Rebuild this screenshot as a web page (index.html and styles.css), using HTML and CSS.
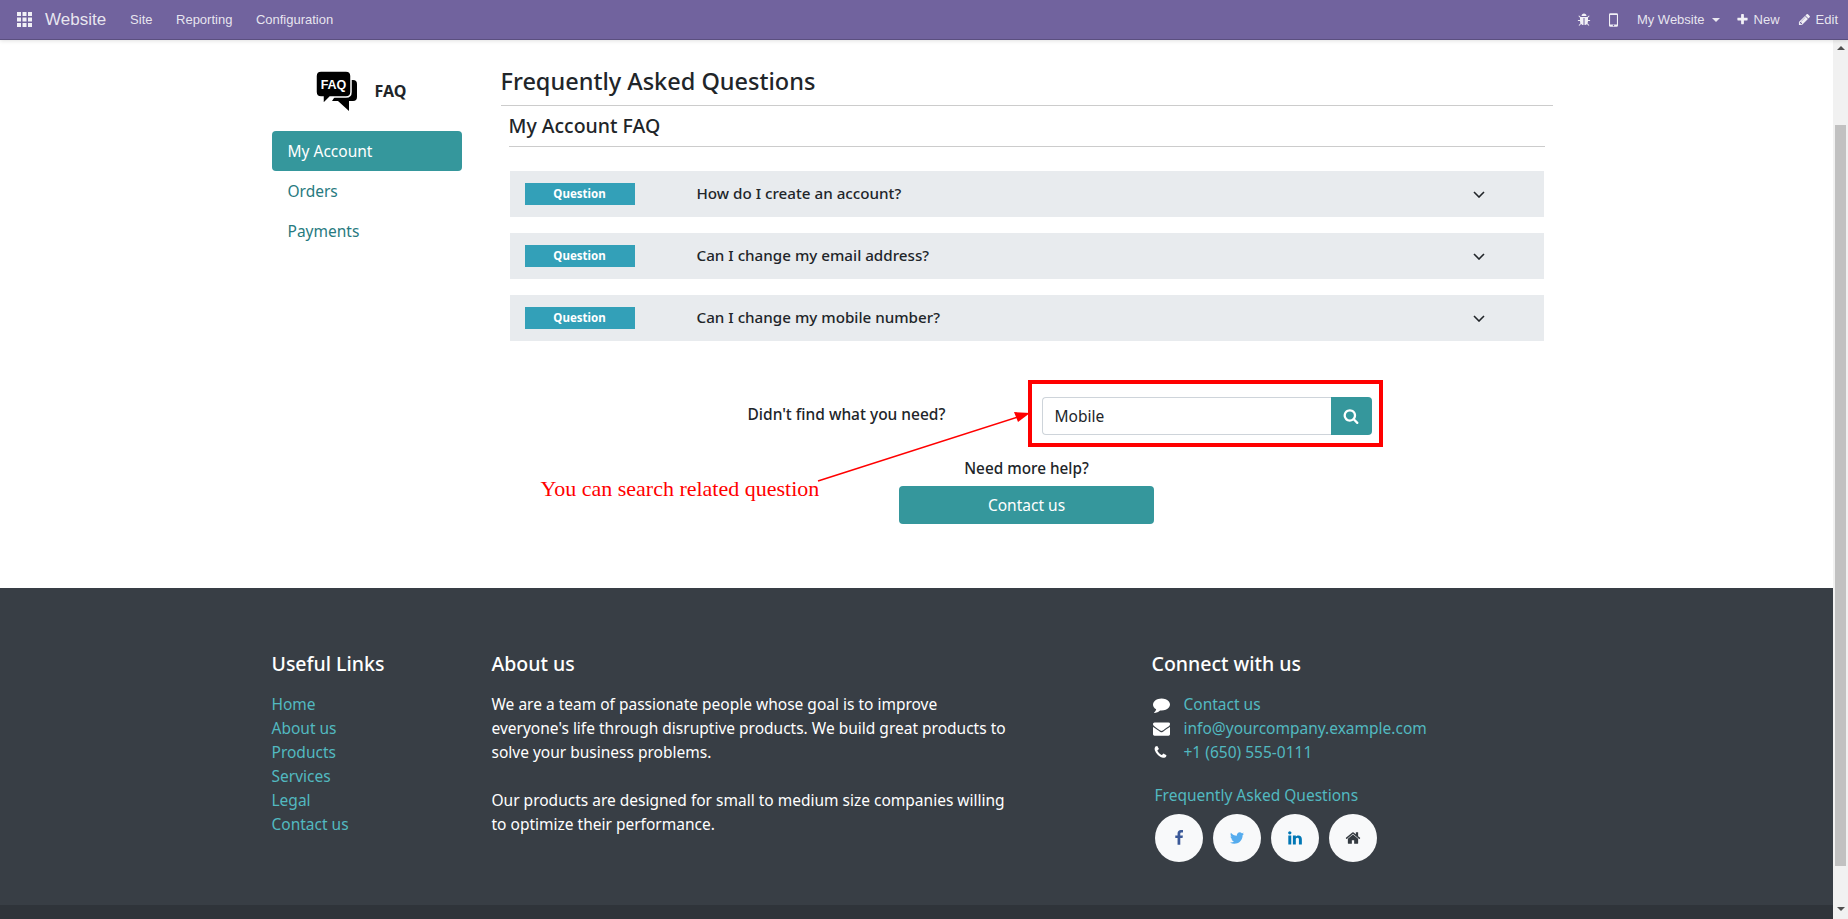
FILE: index.html
```html
<!DOCTYPE html>
<html lang="en">
<head>
    <meta charset="UTF-8">
    <meta name="viewport" content="width=device-width, initial-scale=1.0">
    <title>Frequently Asked Questions</title>
    <link rel="stylesheet" href="styles.css">
</head>
<body>
    <header class="navbar">
        <svg class="apps-icon" viewBox="0 0 15 15"><path d="M0 0h4v4H0zM5.5 0h4v4h-4zM11 0h4v4h-4zM0 5.5h4v4H0zM5.5 5.5h4v4h-4zM11 5.5h4v4h-4zM0 11h4v4H0zM5.5 11h4v4h-4zM11 11h4v4h-4z"/></svg>
        <span class="brand">Website</span>
        <a class="nav-link">Site</a>
        <a class="nav-link">Reporting</a>
        <a class="nav-link">Configuration</a>
        <div class="nav-right">
            <svg class="nav-icon bug" viewBox="0 0 1792 1792"><path d="M1696 960q0 26-19 45t-45 19h-224q0 171-67 290l208 209q19 19 19 45t-19 45q-18 19-45 19t-45-19l-198-197q-5 5-15 13t-42 28.5-65 36.5-82 29-97 13v-896h-128v896q-51 0-101.5-13.5t-87-33-66-39-43.5-32.5l-15-14-183 207q-20 21-48 21-24 0-43-16-19-18-20.5-44.5t15.5-46.5l202-227q-58-114-58-274h-224q-26 0-45-19t-19-45 19-45 45-19h224v-294l-173-173q-19-19-19-45t19-45 45-19 45 19l173 173h844l173-173q19-19 45-19t45 19 19 45-19 45l-173 173v294h224q26 0 45 19t19 45zm-480-576h-640q0-133 93.5-226.5t226.5-93.5 226.5 93.5 93.5 226.5z"/></svg>
            <svg class="nav-icon mobile" viewBox="0 0 10 15"><path fill-rule="evenodd" d="M1.5 0h7A1.5 1.5 0 0 1 10 1.5v12A1.5 1.5 0 0 1 8.500 15h-7A1.500 1.500 0 0 1 0 13.500v-12A1.500 1.500 0 0 1 1.500 0zM1.200 2v10.500h7.600V2zM5 12.900a.8.8 0 1 0 0 1.600.8.8 0 0 0 0-1.600z"/></svg>
            <span class="nav-text site-name">My Website</span>
            <span class="caret"></span>
            <svg class="nav-icon plus" viewBox="0 0 1792 1792"><path d="M1600 736v192q0 40-28 68t-68 28h-416v416q0 40-28 68t-68 28h-192q-40 0-68-28t-28-68v-416h-416q-40 0-68-28t-28-68v-192q0-40 28-68t68-28h416v-416q0-40 28-68t68-28h192q40 0 68 28t28 68v416h416q40 0 68 28t28 68z"/></svg>
            <span class="nav-text new">New</span>
            <svg class="nav-icon pencil" viewBox="0 0 1792 1792"><path d="M491 1536l91-91-235-235-91 91v107h128v128h107zm523-928q0-22-22-22-10 0-17 7l-542 542q-7 7-7 17 0 22 22 22 10 0 17-7l542-542q7-7 7-17zm-54-192l416 416-832 832h-416v-416zm683 96q0 53-37 90l-166 166-416-416 166-165q36-38 90-38 53 0 91 38l235 234q37 39 37 91z"/></svg>
            <span class="nav-text">Edit</span>
        </div>
    </header>

    <div class="viewport">
        <div class="page">
            <main class="container content">
                <aside class="sidebar">
                    <div class="faq-logo">
                        <svg class="logo-icon" viewBox="0 0 41 40">
                            <path d="M30 9h7q4 0 4 4v13q0 4-4 4h-4v10l-11-10h-6z"/>
                            <path d="M5 0h25q5 0 5 5v16q0 5-5 5H14L7 33v-7H5q-5 0-5-5V5q0-5 5-5z" stroke="#fff" stroke-width="1.500"/>
                            <text x="17.500" y="17.500" class="logo-text">FAQ</text>
                        </svg>
                        <span class="logo-label">FAQ</span>
                    </div>
                    <nav class="side-nav">
                        <a class="side-link active">My Account</a>
                        <a class="side-link">Orders</a>
                        <a class="side-link">Payments</a>
                    </nav>
                </aside>

                <section class="faq">
                    <h1 class="faq-title">Frequently Asked Questions</h1>
                    <h2 class="faq-subtitle">My Account FAQ</h2>
                    <div class="question-list">
                        <div class="question">
                            <span class="badge">Question</span>
                            <span class="question-text">How do I create an account?</span>
                            <svg class="chevron" viewBox="0 0 12 7"><path d="M1 1l5 5 5-5"/></svg>
                        </div>
                        <div class="question">
                            <span class="badge">Question</span>
                            <span class="question-text">Can I change my email address?</span>
                            <svg class="chevron" viewBox="0 0 12 7"><path d="M1 1l5 5 5-5"/></svg>
                        </div>
                        <div class="question">
                            <span class="badge">Question</span>
                            <span class="question-text">Can I change my mobile number?</span>
                            <svg class="chevron" viewBox="0 0 12 7"><path d="M1 1l5 5 5-5"/></svg>
                        </div>
                    </div>

                    <div class="search-row">
                        <span class="search-label">Didn't find what you need?</span>
                        <div class="search-group">
                            <input class="search-input" type="text" value="Mobile">
                            <button class="search-btn">
                                <svg class="search-icon" viewBox="0 0 1792 1792"><path d="M1216 832q0-185-131.500-316.500t-316.500-131.500-316.500 131.500-131.500 316.500 131.500 316.500 316.500 131.500 316.500-131.500 131.500-316.500zm512 832q0 52-38 90t-90 38q-54 0-90-38l-343-342q-179 124-399 124-143 0-273.500-55.500t-225-150-150-225-55.500-273.500 55.500-273.500 150-225 225-150 273.500-55.500 273.500 55.500 225 150 150 225 55.500 273.500q0 220-124 399l343 343q37 37 37 90z"/></svg>
                            </button>
                            <div class="search-mark"></div>
                        </div>
                    </div>

                    <div class="help">
                        <div class="help-label">Need more help?</div>
                        <a class="contact-btn">Contact us</a>
                    </div>
                </section>

                <!-- annotation drawn over the page -->
                <svg class="note-arrow" viewBox="0 0 220 74">
                    <path d="M4 70L204 6"/>
                    <polygon points="216,2 200,1 204,11"/>
                </svg>
                <span class="note-text">You can search related question</span>
            </main>

            <footer class="footer">
                <div class="container footer-grid">
                    <div class="footer-col links-col">
                        <h3 class="footer-title">Useful Links</h3>
                        <a class="footer-link">Home</a>
                        <a class="footer-link">About us</a>
                        <a class="footer-link">Products</a>
                        <a class="footer-link">Services</a>
                        <a class="footer-link">Legal</a>
                        <a class="footer-link">Contact us</a>
                    </div>
                    <div class="footer-col about-col">
                        <h3 class="footer-title">About us</h3>
                        <p class="about-text">We are a team of passionate people whose goal is to improve everyone's life through disruptive products. We build great products to solve your business problems.</p>
                        <p class="about-text">Our products are designed for small to medium size companies willing to optimize their performance.</p>
                    </div>
                    <div class="footer-col connect-col">
                        <h3 class="footer-title">Connect with us</h3>
                        <div class="contact-line">
                            <svg class="contact-icon" viewBox="0 0 1792 1792"><path d="M1792 896q0 174-120 321.500t-326 233-450 85.500q-70 0-145-8-198 175-460 242-49 14-114 22-17 2-30.500-9t-17.500-29v-1q-3-4-.5-12t2-10 4.500-9.500l6-9 7-8.500 8-9q7-8 31-34.500t34.500-38 31-39.500 32.500-51 27-59 26-76q-157-89-247.500-220t-90.500-281q0-130 71-248.500t191-204.500 286-136.500 348-50.500q244 0 450 85.500t326 233 120 321.500z"/></svg>
                            <a class="footer-link">Contact us</a>
                        </div>
                        <div class="contact-line">
                            <svg class="contact-icon" viewBox="0 0 1792 1792"><path d="M1792 710v794q0 66-47 113t-113 47h-1472q-66 0-113-47t-47-113v-794q44 49 101 87 362 246 497 345 57 42 92.500 65.500t94.500 48 110 24.500h2q51 0 110-24.500t94.500-48 92.500-65.500q170-123 498-345 57-39 100-87zm0-294q0 79-49 151t-122 123q-376 261-468 325-10 7-42.500 30.500t-54 38-52 32.500-57.500 27-50 9h-2q-23 0-50-9t-57.500-27-52-32.500-54-38-42.500-30.500q-91-64-262-182.500t-205-142.500q-62-42-117-115.500t-55-136.500q0-78 41.500-130t118.500-52h1472q65 0 112.500 47t47.500 113z"/></svg>
                            <a class="footer-link">info@yourcompany.example.com</a>
                        </div>
                        <div class="contact-line">
                            <svg class="contact-icon phone" viewBox="0 0 1792 1792"><path d="M1600 1240q0 27-10 70.500t-21 68.500q-21 50-122 106-94 51-186 51-27 0-53-3.500t-57.500-12.500-47-14.500-55.500-20.500-49-18q-98-35-175-83-127-79-264-216t-216-264q-48-77-83-175-3-9-18-49t-20.500-55.500-14.500-47-12.500-57.500-3.500-53q0-92 51-186 56-101 106-122 25-11 68.500-21t70.500-10q14 0 21 3 18 6 53 76 11 19 30 54t35 63.500 31 53.500q3 4 17.500 25t21.500 35.500 7 28.500q0 20-28.500 50t-62 55-62 53-28.500 46q0 9 5 22.500t8.500 20.500 14 24 11.500 19q76 137 174 235t235 174q2 1 19 11.500t24 14 20.500 8.500 22.500 5q18 0 46-28.500t53-62 55-62 50-28.500q14 0 28.500 7t35.500 21.500 25 17.500q25 15 53.500 31t63.500 35 54 30q70 35 76 53 3 7 3 21z"/></svg>
                            <a class="footer-link">+1 (650) 555-0111</a>
                        </div>
                        <a class="footer-link faq-link">Frequently Asked Questions</a>
                        <div class="social">
                            <a class="social-btn"><svg class="social-icon facebook" viewBox="0 0 1792 1792"><path d="M1343 12v264h-157q-86 0-116 36t-30 108v189h293l-39 296h-254v759h-306v-759h-255v-296h255v-218q0-186 104-288.500t277-102.500q147 0 228 12z"/></svg></a>
                            <a class="social-btn"><svg class="social-icon twitter" viewBox="0 0 1792 1792"><path d="M1684 408q-67 98-162 167 1 14 1 42 0 130-38 259.500t-115.500 248.500-184.500 210.500-258 146-323 54.500q-271 0-496-145 35 4 78 4 225 0 401-138-105-2-188-64.500t-114-159.500q33 5 61 5 43 0 85-11-112-23-185.500-111.500t-73.500-205.500v-4q68 38 146 41-66-44-105-115t-39-154q0-88 44-163 121 149 294.500 238.500t371.500 99.500q-8-38-8-74 0-134 94.500-228.500t228.500-94.500q140 0 236 102 109-21 205-78-37 115-142 178 93-10 186-50z"/></svg></a>
                            <a class="social-btn"><svg class="social-icon linkedin" viewBox="0 0 1792 1792"><path d="M477 625v991h-330v-991h330zm21-306q1 73-50.500 122t-135.500 49h-2q-82 0-132-49t-50-122q0-74 51.500-122.500t134.500-48.500 133 48.500 51 122.500zm1166 729v568h-329v-530q0-105-40.500-164.500t-126.500-59.500q-63 0-105.500 34.500t-63.500 85.500q-11 30-11 81v553h-329q2-399 2-647t-1-296l-1-48h329v144h-2q20-32 41-56t56.500-52 87-43.500 114.500-15.500q171 0 275 113.500t104 332.500z"/></svg></a>
                            <a class="social-btn"><svg class="social-icon home" viewBox="0 0 1792 1792"><path d="M1472 992v480q0 26-19 45t-45 19h-384v-384h-256v384h-384q-26 0-45-19t-19-45v-480q0-1 .5-3t.5-3l575-474 575 474q1 2 1 6zm223-69l-62 74q-8 9-21 11h-3q-13 0-21-7l-692-577-692 577q-12 8-24 7-13-2-21-11l-62-74q-8-10-7-23.500t11-21.500l719-599q32-26 76-26t76 26l244 204v-195q0-14 9-23t23-9h192q14 0 23 9t9 23v408l219 182q10 8 11 21.500t-7 23.500z"/></svg></a>
                        </div>
                    </div>
                </div>
            </footer>
            <div class="copyright"></div>
        </div>
        <div class="scrollbar">
            <span class="scroll-arrow"></span>
            <div class="scroll-thumb"></div>
            <span class="scroll-arrow down"></span>
        </div>
    </div>
</body>
</html>
```

FILE: styles.css
```css
* {
    box-sizing: border-box;
}
html, body {
    height: 100%;
}
body {
    margin: 0;
    display: flex;
    flex-direction: column;
    overflow: hidden;
    font-family: "Noto Sans", sans-serif;
    font-size: 15px;
    color: #212529;
    background: #fff;
}
.navbar {
    height: 40px;
    flex: none;
    display: flex;
    align-items: center;
    padding-left: 17px;
    background: #71639e;
    border-bottom: 1px solid #5b4f7f;
    box-shadow: 0 1px 4px rgba(0, 0, 0, 0.12);
    font-family: "Liberation Sans", sans-serif;
    font-size: 13px;
    color: rgba(255, 255, 255, 0.85);
    position: relative;
    z-index: 2;
}
.apps-icon {
    width: 15px;
    height: 15px;
    fill: rgba(255, 255, 255, 0.9);
}
.brand {
    font-size: 17px;
    margin-left: 13px;
    margin-right: 24px;
}
.nav-link {
    margin-right: 23.500px;
}
.nav-right {
    margin-left: auto;
    display: flex;
    align-items: center;
    padding-right: 10px;
}
.nav-icon {
    fill: rgba(255, 255, 255, 0.9);
}
.bug {
    width: 14px;
    height: 14px;
}
.mobile {
    width: 9px;
    height: 14px;
    margin-left: 18px;
    margin-right: 19px;
}
.caret {
    margin-left: 7px;
    margin-right: 16px;
    border-top: 4px solid rgba(255, 255, 255, 0.85);
    border-left: 4px solid transparent;
    border-right: 4px solid transparent;
}
.plus {
    width: 13px;
    height: 13px;
    margin-right: 5px;
}
.new {
    margin-right: 18px;
}
.pencil {
    width: 13px;
    height: 13px;
    margin-right: 5px;
}
.viewport {
    flex: 1;
    min-height: 0;
    display: flex;
}
.page {
    flex: 1;
    min-width: 0;
    display: flex;
    flex-direction: column;
}
.container {
    width: 1320px;
    margin: 0 auto;
}
.content {
    display: flex;
    position: relative;
    height: 548px;
    flex: none;
}
.sidebar {
    width: 220px;
    flex: none;
    padding: 31px 15px 0;
}
.faq-logo {
    display: flex;
    align-items: center;
    height: 40px;
    padding-left: 44px;
}
.logo-icon {
    width: 41px;
    height: 40px;
    overflow: visible;
}
.logo-text {
    font-family: "Liberation Sans", sans-serif;
    font-size: 12.500px;
    font-weight: 700;
    fill: #fff;
    text-anchor: middle;
}
.logo-label {
    margin-left: 18px;
    font-size: 16px;
    font-weight: 700;
}
.side-nav {
    margin-top: 20px;
    display: flex;
    flex-direction: column;
}
.side-link {
    height: 40px;
    line-height: 40px;
    padding-left: 16px;
    border-radius: 4px;
    font-size: 15.500px;
    color: #277a80;
}
.side-link.active {
    background: #35979c;
    color: #fff;
}
.faq {
    flex: 1;
    min-width: 0;
    padding: 24px 24px 0;
}
.faq-title {
    margin: 0;
    height: 42px;
    line-height: 35px;
    font-size: 23.500px;
    font-weight: 500;
    border-bottom: 1px solid #ccc;
}
.faq-subtitle {
    margin: 0 8px;
    height: 41px;
    line-height: 40px;
    font-size: 19.500px;
    font-weight: 500;
    border-bottom: 1px solid #ccc;
}
.question-list {
    margin: 24px 9px 0;
    display: flex;
    flex-direction: column;
    gap: 16px;
}
.question {
    height: 46px;
    display: flex;
    align-items: center;
    padding: 0 59px 0 15px;
    background: #e8ebee;
}
.badge {
    width: 110px;
    height: 22px;
    line-height: 22px;
    text-align: center;
    background: #33a0b8;
    color: #fff;
    font-size: 11.500px;
    font-weight: 700;
}
.question-text {
    margin-left: 62px;
    flex: 1;
    font-size: 15.200px;
    font-weight: 500;
    line-height: 24px;
    padding-bottom: 3px;
}
.chevron {
    width: 12px;
    height: 7px;
    fill: none;
    stroke: #212529;
    stroke-width: 1.600;
}
.search-row {
    margin-top: 56px;
    display: flex;
    align-items: center;
    padding-left: 246px;
}
.search-label {
    width: 295px;
    font-size: 15.500px;
    font-weight: 500;
    padding-bottom: 5px;
    padding-left: 1px;
}
.search-group {
    position: relative;
    width: 330px;
    height: 38px;
    display: flex;
}
.search-input {
    flex: 1;
    min-width: 0;
    padding: 0 12px;
    border: 1px solid #ced4da;
    border-right: none;
    border-radius: 4px 0 0 4px;
    font: inherit;
    font-size: 15.500px;
    color: #212529;
    outline: none;
}
.search-btn {
    width: 41px;
    border: none;
    padding: 0;
    border-radius: 0 4px 4px 0;
    background: #35979c;
    display: flex;
    align-items: center;
    justify-content: center;
}
.search-icon {
    width: 16px;
    height: 16px;
    fill: #fff;
}
.search-mark {
    position: absolute;
    top: -17px;
    bottom: -12px;
    left: -14px;
    right: -11px;
    border: 4px solid #f00;
}
.help {
    text-align: center;
    margin-top: 21px;
}
.help-label {
    height: 24px;
    line-height: 24px;
    font-size: 15.300px;
    font-weight: 500;
}
.contact-btn {
    display: block;
    width: 255px;
    height: 38px;
    line-height: 38px;
    margin: 6px auto 0;
    border-radius: 4px;
    background: #35979c;
    color: #fff;
    font-size: 15.500px;
}
.note-arrow {
    position: absolute;
    left: 557px;
    top: 371px;
    width: 220px;
    height: 74px;
}
.note-arrow path {
    fill: none;
    stroke: #f00;
    stroke-width: 1.600;
}
.note-arrow polygon {
    fill: #f00;
}
.note-text {
    position: absolute;
    left: 284px;
    top: 436px;
    font-family: "Liberation Serif", serif;
    font-size: 22px;
    color: #f00;
    white-space: nowrap;
}
.footer {
    height: 317px;
    flex: none;
    background: #383e45;
    color: #fff;
}
.footer-grid {
    display: flex;
    padding-top: 64px;
}
.footer-col {
    padding: 0 15px;
}
.links-col {
    width: 220px;
}
.about-col {
    width: 550px;
    margin-right: 110px;
}
.connect-col {
    width: 440px;
}
.footer-title {
    margin: 0 0 16px;
    height: 24px;
    line-height: 24px;
    font-size: 19.500px;
    font-weight: 500;
}
.footer-link {
    display: block;
    height: 24px;
    line-height: 24px;
    font-size: 15.500px;
    color: #52b9c0;
}
.about-text {
    margin: 0 0 24px;
    line-height: 24px;
    font-size: 15.500px;
}
.contact-line {
    display: flex;
    align-items: center;
    height: 24px;
}
.contact-icon {
    width: 17px;
    height: 17px;
    fill: #fff;
    margin-left: 1px;
    margin-right: 14px;
}
.contact-icon.phone {
    width: 15px;
    height: 15px;
    margin-right: 16px;
}
.faq-link {
    margin: 19px 0 0 3px;
}
.social {
    margin: 7px 0 0 3px;
    display: flex;
    gap: 10px;
}
.social-btn {
    width: 48px;
    height: 48px;
    border-radius: 50%;
    background: #f8f9fa;
    display: flex;
    align-items: center;
    justify-content: center;
}
.social-icon {
    width: 16px;
    height: 16px;
}
.facebook {
    fill: #3b5998;
}
.twitter {
    fill: #55acee;
}
.linkedin {
    fill: #0077b5;
}
.home {
    fill: #343a40;
}
.copyright {
    flex: 1;
    background: #2f343a;
}
.scrollbar {
    width: 15px;
    flex: none;
    background: #f1f1f1;
    display: flex;
    flex-direction: column;
    align-items: center;
}
.scroll-arrow {
    margin-top: 6px;
    border-bottom: 4px solid #505050;
    border-left: 4px solid transparent;
    border-right: 4px solid transparent;
}
.scroll-arrow.down {
    margin-top: 41px;
    border-bottom: none;
    border-top: 4px solid #505050;
}
.scroll-thumb {
    width: 11px;
    height: 741px;
    margin-top: 75px;
    flex: none;
    background: #c1c1c1;
}
```
